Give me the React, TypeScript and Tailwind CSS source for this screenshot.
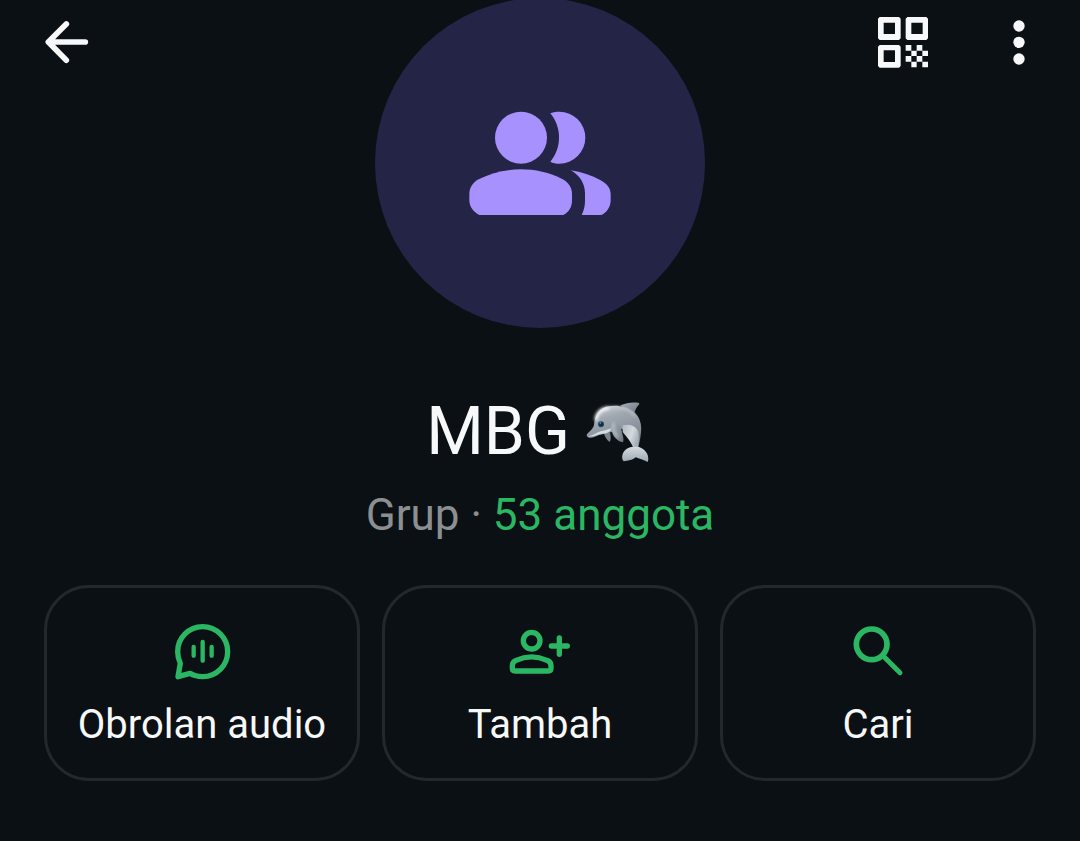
import type { ReactNode } from "react";

function BackIcon() {
  return (
    <svg viewBox="42 54 144 144" className="h-12 w-12" fill="none" stroke="currentColor" strokeWidth="17" strokeLinecap="round" strokeLinejoin="round" aria-hidden="true">
      <path d="M109 72 L55 126 L109 181 M58 126 H166" />
    </svg>
  );
}

function QrIcon() {
  return (
    <svg viewBox="54 51 150 153" className="h-[51px] w-[50px]" fill="currentColor" aria-hidden="true">
      <path
        fillRule="evenodd"
        d="M59 51h58l5 5v59l-5 5H59l-5-5V56zM71 68v34h34V68zM142 51h57l5 5v59l-5 5h-57l-5-5V56zM154 68v34h34V68zM59 135h58l5 5v58l-5 5H59l-5-5v-58zM71 151v35h34v-35z"
      />
      <path d="M137 135h17v17h-17zM170 135h17v17h-17zM154 152h16v16h-16zM187 152h17v16h-17zM137 168h17v17h-17zM170 168h17v17h-17zM154 185h16v17h-16zM187 185h17v17h-17z" />
    </svg>
  );
}

function MoreIcon() {
  return (
    <svg viewBox="459 51 36 153" className="h-[51px] w-3" fill="currentColor" aria-hidden="true">
      <circle cx="477" cy="78" r="17" />
      <circle cx="477" cy="127" r="17" />
      <circle cx="477" cy="177" r="17" />
    </svg>
  );
}

function GroupIcon() {
  return (
    <svg viewBox="54 60 432 318" className="h-[106px] w-36" fill="#a791ff" aria-hidden="true">
      <circle cx="213" cy="143" r="78" />
      <path d="M301 70C312 66 320 65 328 65a78 78 0 0 1 0 156C318 221 309 219 301 215C336 174 336 112 301 70Z" />
      <path d="M88 375C70 366 58 350 58 330V312C58 294 68 278 86 268C125 247 169 238 212 238S299 247 338 268C356 278 366 294 366 312V330C366 350 358 366 340 375Z" />
      <path d="M362 241C394 246 425 256 452 271C472 282 482 295 482 313V330C482 351 471 367 454 375H395C402 361 405 347 405 332V310C405 281 390 257 362 241Z" />
    </svg>
  );
}

function DolphinIcon() {
  return (
    <svg viewBox="52 28 192 186" className="h-[62px] w-16" role="img" aria-label="🐬">
      <defs>
        <linearGradient id="body" x1="0.15" y1="0" x2="0.5" y2="1">
          <stop offset="0" stopColor="#d0d5da" />
          <stop offset="0.3" stopColor="#a0a8b1" />
          <stop offset="1" stopColor="#77818c" />
        </linearGradient>
        <linearGradient id="belly" x1="0" y1="0" x2="1" y2="0.5">
          <stop offset="0" stopColor="#b1bac2" />
          <stop offset="0.6" stopColor="#d3dade" />
          <stop offset="1" stopColor="#a5aeb7" />
        </linearGradient>
        <linearGradient id="fin" x1="0" y1="0" x2="1" y2="1">
          <stop offset="0" stopColor="#a4adb6" />
          <stop offset="1" stopColor="#6e7781" />
        </linearGradient>
        <linearGradient id="tail" x1="0" y1="0" x2="0" y2="1">
          <stop offset="0" stopColor="#d6dce0" />
          <stop offset="1" stopColor="#9da6b0" />
        </linearGradient>
        <filter id="soft" x="-50%" y="-50%" width="200%" height="200%">
          <feGaussianBlur stdDeviation="4" />
        </filter>
      </defs>
      <path d="M154 42C172 33 190 31 208 33C213 34 213 37 209 41C203 48 200 55 197 63Z" fill="url(#fin)" />
      <path d="M105 124C108 134 114 145 123 151C127 145 127 134 124 123Z" fill="#7c8690" />
      <path d="M54 129C62 119 73 113 76 100C78 75 89 54 111 46C141 37 174 44 196 61C213 75 220 98 217 122C215 142 212 157 207 173H196C193 147 180 124 160 112C151 107 144 114 136 118C117 127 96 126 77 136C67 140 54 139 54 129Z" fill="url(#body)" />
      <path d="M82 82C86 61 99 51 118 49" fill="none" stroke="#f5f6f8" strokeWidth="10" strokeLinecap="round" filter="url(#soft)" />
      <path d="M120 48C155 41 184 54 199 73" fill="none" stroke="#c8ced4" strokeWidth="4" filter="url(#soft)" />
      <path d="M57 134C73 133 84 121 99 118C109 117 119 112 128 110C128 119 116 126 102 126C87 127 72 138 57 134Z" fill="#d4dce1" />
      <path d="M162 101C178 96 197 100 206 114C214 129 210 155 207 172H195C189 152 174 136 162 121Z" fill="url(#belly)" />
      <path d="M132 88C124 101 128 122 137 135C145 145 154 151 163 152C167 143 162 133 160 122C159 109 149 92 132 88Z" fill="url(#fin)" />
      <path d="M136 94C131 105 136 122 148 136" fill="none" stroke="#c1c9d0" strokeWidth="5" filter="url(#soft)" />
      <path d="M195 165C180 165 167 174 162 187C159 196 160 205 165 209C177 207 192 206 201 197C211 202 225 204 237 211C240 206 239 198 237 190C233 177 221 169 208 165Z" fill="url(#tail)" />
      <path d="M201 172V196" stroke="#87929c" strokeWidth="3" filter="url(#soft)" />
      <circle cx="97" cy="98" r="9" fill="#274a67" />
      <circle cx="98" cy="98" r="6" fill="#142d46" />
      <circle cx="95" cy="94" r="2" fill="#94b4c9" />
    </svg>
  );
}

function AudioChatIcon() {
  return (
    <svg viewBox="40 38 171 171" className="h-[57px] w-[57px]" fill="none" stroke="currentColor" strokeLinecap="round" strokeLinejoin="round" aria-hidden="true">
      <path strokeWidth="16" d="M59 159C54 149 51 137 51 124A75 75 0 1 1 126 199C112 199 99 196 88 189L52 199Z" />
      <path strokeWidth="13" d="M99 110V136M126 95V151M153 110V136" />
    </svg>
  );
}

function AddPersonIcon() {
  return (
    <svg viewBox="42 38 186 171" className="h-[57px] w-[62px]" fill="none" stroke="currentColor" strokeWidth="16" strokeLinecap="round" strokeLinejoin="round" aria-hidden="true">
      <circle cx="110" cy="91" r="25" />
      <path d="M60 182C55 182 52 179 52 174V166C52 158 56 153 63 150C92 137 127 137 156 150C164 153 168 158 168 166V174C168 179 165 182 160 182Z" />
      <path d="M169 107H217M193 83V132" />
    </svg>
  );
}

function SearchIcon() {
  return (
    <svg viewBox="43 38 171 171" className="h-[57px] w-[57px]" fill="none" stroke="currentColor" strokeWidth="17" strokeLinecap="round" aria-hidden="true">
      <circle cx="108" cy="102" r="46" />
      <path strokeWidth="15" d="M142 136L193 187" />
    </svg>
  );
}

function ActionCard({ icon, label }: { icon: ReactNode; label: string }) {
  return (
    <button type="button" className="flex flex-1 flex-col items-center gap-[21px] rounded-[45px] border-3 border-[#23282c] pt-[35px] pb-[29px]">
      <span className="text-[#2bb663]">{icon}</span>
      <span className="text-[40px] leading-[48px] whitespace-nowrap">{label}</span>
    </button>
  );
}

export default function App() {
  return (
    <div className="min-h-screen overflow-hidden bg-[#0b1014] font-['Roboto',sans-serif] text-[#f7f8fa]">
      <header className="grid grid-cols-[1fr_auto_1fr] items-start px-11">
        <button type="button" aria-label="Kembali" className="mt-[18px] justify-self-start">
          <BackIcon />
        </button>
        <div className="-mt-0.5 flex h-[330px] w-[330px] items-center justify-center rounded-full bg-[#242447]">
          <GroupIcon />
        </div>
        <div className="mt-[17px] mr-[11px] flex gap-[85px] justify-self-end">
          <button type="button" aria-label="Kode QR">
            <QrIcon />
          </button>
          <button type="button" aria-label="Opsi lainnya">
            <MoreIcon />
          </button>
        </div>
      </header>
      <main>
        <h1 className="mt-16 flex items-center justify-center gap-4 pr-1 text-[66px] leading-[80px]">
          MBG
          <DolphinIcon />
        </h1>
        <p className="mt-[17px] text-center text-[44px] leading-[52px] text-[#8b8f92]">
          Grup · <a href="#anggota" className="text-[#2bb663]">53 anggota</a>
        </p>
        <div className="mt-11 flex gap-[22px] px-11">
          <ActionCard icon={<AudioChatIcon />} label="Obrolan audio" />
          <ActionCard icon={<AddPersonIcon />} label="Tambah" />
          <ActionCard icon={<SearchIcon />} label="Cari" />
        </div>
      </main>
    </div>
  );
}
